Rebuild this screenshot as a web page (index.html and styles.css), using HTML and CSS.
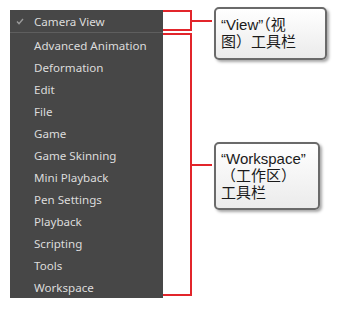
FILE: index.html
```html
<!DOCTYPE html>
<html lang="en">
<head>
    <meta charset="UTF-8">
    <title>Toolbars</title>
    <link rel="stylesheet" href="styles.css">
</head>
<body>

    <div class="stage">
        <!-- Toolbars menu -->
        <div class="menu">
            <div class="menu-item">
                <span class="check">
                    <svg width="8" height="7" viewBox="0 0 8 7"><path d="M1 3.6 L3 5.6 L7 1" fill="none" stroke="#9a9a9a" stroke-width="1.4"/></svg>
                </span>
                Camera View
            </div>
            <div class="separator"></div>
            <div class="menu-item"><span class="check"></span>Advanced Animation</div>
            <div class="menu-item"><span class="check"></span>Deformation</div>
            <div class="menu-item"><span class="check"></span>Edit</div>
            <div class="menu-item"><span class="check"></span>File</div>
            <div class="menu-item"><span class="check"></span>Game</div>
            <div class="menu-item"><span class="check"></span>Game Skinning</div>
            <div class="menu-item"><span class="check"></span>Mini Playback</div>
            <div class="menu-item"><span class="check"></span>Pen Settings</div>
            <div class="menu-item"><span class="check"></span>Playback</div>
            <div class="menu-item"><span class="check"></span>Scripting</div>
            <div class="menu-item"><span class="check"></span>Tools</div>
            <div class="menu-item"><span class="check"></span>Workspace</div>
        </div>

        <!-- Red brackets -->
        <div class="brackets">
            <div class="bracket bracket-view"></div>
            <div class="bracket bracket-workspace"></div>
        </div>

        <!-- Callouts -->
        <div class="callouts">
            <div class="callout callout-view">“View”（视<br>图）工具栏</div>
            <div class="callout callout-workspace">“Workspace”<br>（工作区）<br>工具栏</div>
        </div>
    </div>

</body>
</html>
```

FILE: styles.css
```css
body {
    margin: 0;
    background-color: #ffffff;
    width: 341px;
    height: 309px;
    overflow: hidden;
}

.stage {
    display: flex;
    align-items: flex-start;
    padding: 7px 0 0 10px;
}

.menu {
    margin-top: 3px;
    width: 153px;
    background-color: #474747;
    font-family: "Noto Sans", sans-serif;
    font-size: 11.6px;
    color: #dcdcdc;
}

.menu-item {
    display: flex;
    align-items: center;
    height: 22px;
    white-space: nowrap;
}

.check {
    display: flex;
    align-items: center;
    width: 18px;
    padding-left: 6px;
    height: 22px;
}

.separator {
    height: 1px;
    background-color: #5e5e5e;
    margin-bottom: 1px;
}

.brackets {
    margin-top: 3px;
    width: 29px;
}

.bracket {
    position: relative;
    box-sizing: border-box;
    border: 2px solid #e2252b;
    border-left: none;
}

.bracket::after {
    content: "";
    position: absolute;
    left: 100%;
    top: 50%;
    margin-top: -1px;
    width: 22px;
    height: 2px;
    background-color: #e2252b;
}

.bracket-view {
    height: 21px;
}

.bracket-workspace {
    margin-top: 2px;
    height: 263px;
}

.callouts {
    margin-left: 22px;
}

.callout {
    box-sizing: border-box;
    border: 2px solid #6a6a6a;
    border-radius: 5px;
    background: linear-gradient(#ffffff, #ebebeb);
    box-shadow: 2px 2px 3px rgba(0, 0, 0, 0.35);
    font-family: "Liberation Sans", "Noto Sans CJK SC", sans-serif;
    font-size: 15px;
    line-height: 17px;
    color: #1a1a1a;
    padding-left: 5px;
}

.callout-view {
    width: 113px;
    height: 53px;
    padding-top: 7px;
}

.callout-workspace {
    margin-top: 82px;
    width: 106px;
    height: 68px;
    padding-top: 6px;
}
```
